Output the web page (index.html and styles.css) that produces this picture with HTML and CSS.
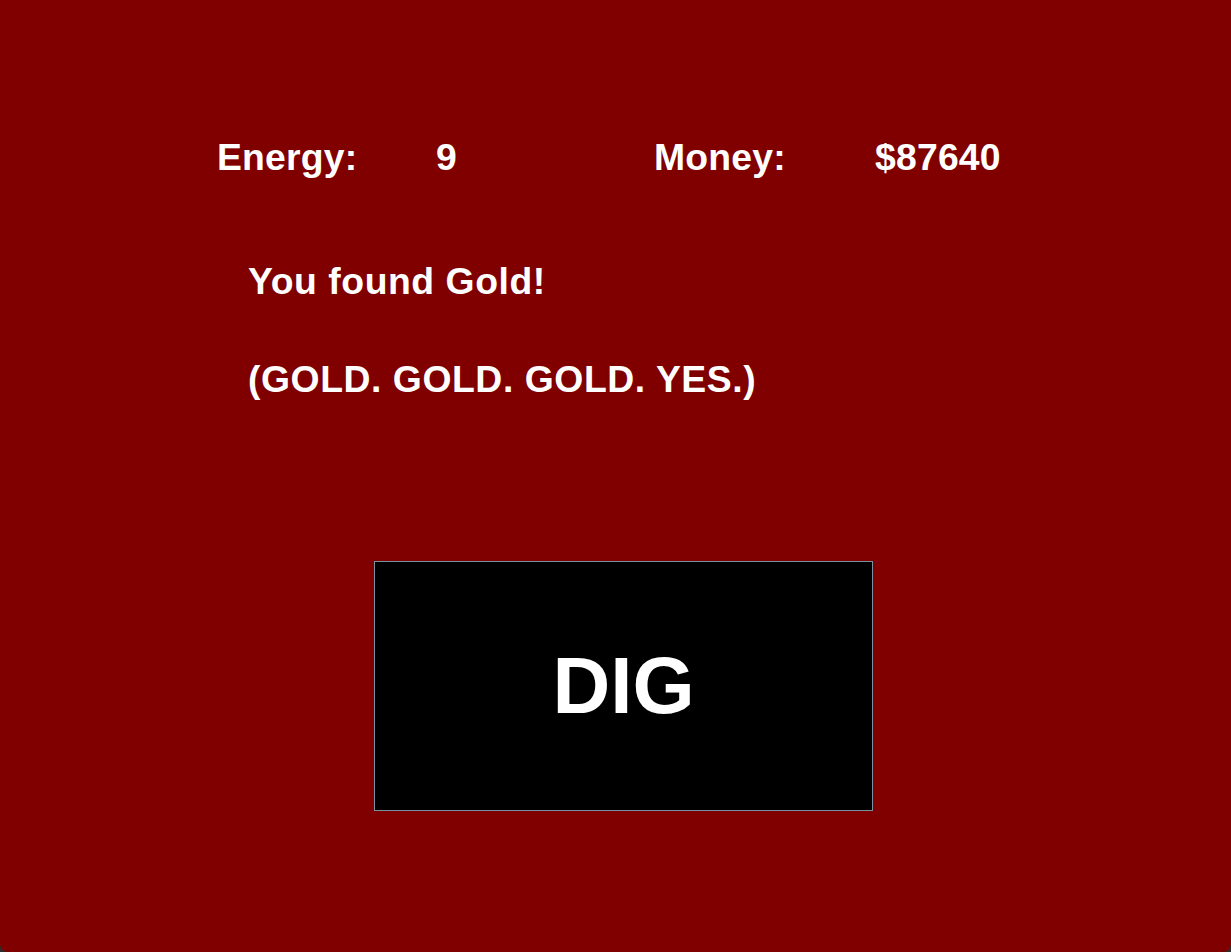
FILE: index.html
```html
<!DOCTYPE html>
<html>
<head>
<meta charset="utf-8">
<link rel="stylesheet" href="styles.css">
</head>
<body>
<div class="app">
  <div class="stats">
    <span class="label">Energy:</span>
    <span class="value">9</span>
    <span class="label">Money:</span>
    <span class="value">$87640</span>
  </div>
  <div class="message">
    <p class="line">You found Gold!</p>
    <p class="line second">(GOLD. GOLD. GOLD. YES.)</p>
  </div>
  <button class="dig">DIG</button>
</div>
</body>
</html>
```
FILE: styles.css
```css
html, body {
  margin: 0;
  padding: 0;
  background: #2e2e2e;
}
.app {
  box-sizing: border-box;
  width: 1231px;
  height: 952px;
  background: #800000;
  color: #ffffff;
  font-family: "Liberation Sans", Arial, sans-serif;
  font-weight: bold;
  padding-top: 136px;
  border-bottom-left-radius: 8px;
  border-bottom-right-radius: 8px;
  overflow: hidden;
}
.stats {
  display: grid;
  grid-template-columns: 219px 218px 221px auto;
  padding-left: 217px;
  font-size: 37.33px;
  line-height: 43px;
  letter-spacing: 0.2px;
}
.message {
  padding-left: 248px;
  margin-top: 81px;
}
.line {
  margin: 0;
  font-size: 37.33px;
  line-height: 43px;
  letter-spacing: 0.55px;
}
.second {
  margin-top: 55px;
}
.dig {
  display: flex;
  align-items: center;
  justify-content: center;
  box-sizing: border-box;
  width: 499px;
  height: 250px;
  margin: 160px 0 0 374px;
  padding: 0;
  background: #000000;
  color: #ffffff;
  border: 1px solid #7a93a3;
  font-family: "Liberation Sans", Arial, sans-serif;
  font-weight: bold;
  font-size: 80px;
  line-height: 1;
}
```
